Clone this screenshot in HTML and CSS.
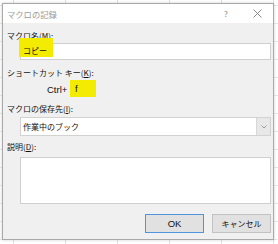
FILE: index.html
```html
<!DOCTYPE html>
<html lang="ja">
  <head>
    <meta charset="UTF-8">
    <title>マクロの記録</title>
    <link rel="stylesheet" href="styles.css">
  </head>
  <body>
    <div class="dialog">
      <div class="titlebar">
        <span class="title">マクロの記録</span>
        <span class="help">?</span>
        <span class="close">
          <svg width="9" height="9" viewBox="0 0 9 9"><path d="M0.5 0.5 L8.5 8.5 M8.5 0.5 L0.5 8.5" stroke="#7a7a7a" stroke-width="0.9" fill="none"/></svg>
        </span>
      </div>
      <div class="content">
        <div class="label">マクロ名(<u>M</u>):</div>
        <div class="field name-field">
          <span class="mark mark-name"></span>
          <span class="value">コピー</span>
        </div>

        <div class="label gap">ショートカット キー(<u>K</u>):</div>
        <div class="shortcut">
          <span class="ctrl">Ctrl+</span>
          <div class="field key-field">
            <span class="mark mark-key"></span>
            <span class="value latin">f</span>
          </div>
        </div>

        <div class="label gap">マクロの保存先(<u>I</u>):</div>
        <div class="select">
          <span class="value">作業中のブック</span>
          <span class="arrow">
            <svg width="6" height="4" viewBox="0 0 6 4"><path d="M0.5 0.5 L3 3 L5.5 0.5" stroke="#888" stroke-width="0.8" fill="none"/></svg>
          </span>
        </div>

        <div class="label gap-small">説明(<u>D</u>):</div>
        <div class="field memo"></div>

        <div class="buttons">
          <div class="btn btn-ok latin">OK</div>
          <div class="btn">キャンセル</div>
        </div>
      </div>
    </div>
  </body>
</html>
```

FILE: styles.css
```css
* {padding: 0; margin: 0; box-sizing: border-box;}
body {
  width: 278px;
  height: 244px;
  overflow: hidden;
  padding: 3px 0 0 2px;
  background-color: #fff;
  background-image:
    linear-gradient(to right, #e2e2e2 1px, transparent 1px),
    linear-gradient(to bottom, #e8e8e8 1px, transparent 1px);
  background-size: 52px 100%, 100% 18px;
  background-position: 13px 0, 0 5px;
  font-family: "Noto Sans CJK JP", "Liberation Sans", sans-serif;
  font-size: 8px;
  color: #111;
}
.latin{
  font-family: "Liberation Sans", sans-serif;
  font-size: 9.5px;
}
.dialog{
  width: 272px;
  height: 237px;
  border: solid 1px #a9a9a9;
  background: #f0f0f0;
  box-shadow: 0px 0px 3px rgba(0,0,0,0.18);
  display: flex;
  flex-direction: column;
}
.titlebar{
  height: 19px;
  background: #fff;
  display: flex;
  align-items: center;
  padding-left: 4px;
  color: #9a9a9a;
}
.title{
  flex: 1;
  font-size: 8.3px;
}
.help{
  width: 8px;
  text-align: center;
  color: #8a8a8a;
  margin-right: 23px;
}
.close{
  display: flex;
  margin-right: 11px;
}
.content{
  flex: 1;
  padding: 7px 2px 0 4px;
  display: flex;
  flex-direction: column;
}
.label{
  line-height: 12px;
  height: 12px;
  white-space: nowrap;
}
.label u{
  text-underline-offset: 1px;
}
.gap{
  margin-top: 7px;
}
.gap-small{
  margin-top: 5px;
}
.field{
  position: relative;
  background: #fff;
  border: solid 1px #cfcfcf;
}
.value{
  position: relative;
  line-height: 12px;
}
.mark{
  position: absolute;
  background: #f4ec00;
}
.name-field{
  margin: 1px 0 0 13px;
  height: 17px;
  padding: 1px 0 0 2px;
}
.mark-name{
  left: -2px;
  top: -6px;
  width: 34px;
  height: 19px;
}
.shortcut{
  margin-top: 1px;
  height: 16px;
  display: flex;
  align-items: center;
  padding-left: 40px;
}
.ctrl{
  margin-top: 2px;
  width: 25px;
  font-family: "Liberation Sans", sans-serif;
  font-size: 9.5px;
}
.key-field{
  width: 19px;
  height: 15px;
  padding: 1px 0 0 2px;
}
.mark-key{
  left: -3px;
  top: -2px;
  width: 26px;
  height: 17px;
}
.select{
  margin: 2px 0 0 13px;
  height: 19px;
  background: #fff;
  border: solid 1px #d2d2d2;
  display: flex;
  align-items: center;
  padding-left: 2px;
}
.select .value{
  flex: 1;
}
.arrow{
  width: 14px;
  height: 100%;
  background: #e8e8e8;
  border-left: solid 1px #d8d8d8;
  display: flex;
  align-items: center;
  justify-content: center;
}
.memo{
  margin: 4px 0 0 13px;
  height: 47px;
}
.buttons{
  margin-top: 10px;
  display: flex;
  justify-content: flex-end;
  gap: 8px;
}
.btn{
  width: 59px;
  height: 19px;
  background: #e1e1e1;
  border: solid 1px #c2c2c2;
  display: flex;
  align-items: center;
  justify-content: center;
}
.btn-ok{
  border-color: #4f95dc;
}
```
